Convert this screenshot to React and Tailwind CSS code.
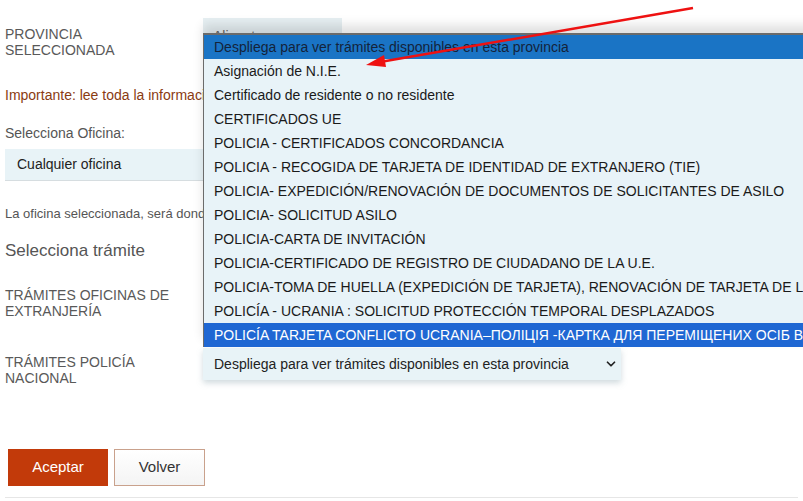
import { ChevronDown } from 'lucide-react'

const options = [
  'Despliega para ver trámites disponibles en esta provincia',
  'Asignación de N.I.E.',
  'Certificado de residente o no residente',
  'CERTIFICADOS UE',
  'POLICIA - CERTIFICADOS CONCORDANCIA',
  'POLICIA - RECOGIDA DE TARJETA DE IDENTIDAD DE EXTRANJERO (TIE)',
  'POLICIA- EXPEDICIÓN/RENOVACIÓN DE DOCUMENTOS DE SOLICITANTES DE ASILO',
  'POLICIA- SOLICITUD ASILO',
  'POLICIA-CARTA DE INVITACIÓN',
  'POLICIA-CERTIFICADO DE REGISTRO DE CIUDADANO DE LA U.E.',
  'POLICIA-TOMA DE HUELLA (EXPEDICIÓN DE TARJETA), RENOVACIÓN DE TARJETA DE LARGA DURACIÓN',
  'POLICÍA - UCRANIA : SOLICITUD PROTECCIÓN TEMPORAL DESPLAZADOS',
  'POLICÍA TARJETA CONFLICTO UCRANIA–ПОЛІЦІЯ -КАРТКА ДЛЯ ПЕРЕМІЩЕНИХ ОСІБ В УКРАЇНІ',
]

function Label({ children }) {
  return <div className="w-[198px] shrink-0 text-[14px] leading-[16px] text-[#595959]">{children}</div>
}

export default function App() {
  return (
    <div className="relative h-[501px] w-[803px] overflow-hidden bg-white font-['Liberation_Sans',Arial,sans-serif]">
      <div className="flex flex-col px-[5px] pt-[18px]">
        <div className="flex">
          <div className="pt-[8px]">
            <Label>
              PROVINCIA
              <br />
              SELECCIONADA
            </Label>
          </div>
          <div className="h-[32px] w-[139px] bg-[#e6eff2] px-[10px] pt-[8px] text-[14px] text-[#666]">Alicante</div>
        </div>

        <p className="mt-[29px] text-[14px] leading-[16px] text-[#8a3b12]">
          Importante: lee toda la información antes de continuar con el proceso
        </p>

        <p className="mt-[22px] text-[14px] leading-[16px] text-[#555]">Selecciona Oficina:</p>

        <div className="mt-[8px] flex h-[32px] w-[616px] items-center border-b border-[#d6dde0] bg-[#e8f3f7] px-[12px] text-[14px] text-[#222]">
          Cualquier oficina
        </div>

        <p className="mt-[25px] text-[13px] leading-[16px] text-[#555]">
          La oficina seleccionada, será donde deberá presentarse para realizar el trámite
        </p>

        <p className="mt-[19px] text-[17px] leading-[20px] text-[#555]">Selecciona trámite</p>

        <div className="mt-[26px] flex">
          <Label>
            TRÁMITES OFICINAS DE
            <br />
            EXTRANJERÍA
          </Label>
        </div>

        <div className="mt-[29px] flex">
          <div className="pt-[6px]">
            <Label>
              TRÁMITES POLICÍA
              <br />
              NACIONAL
            </Label>
          </div>
          <div className="flex h-[32px] w-[418px] items-center justify-between bg-[#e8f3f7] pl-[11px] pr-[3px] text-[14px] text-[#222] shadow-[0_3px_6px_rgba(120,150,160,0.35)]">
            <span>Despliega para ver trámites disponibles en esta provincia</span>
            <ChevronDown className="size-[14px] text-[#222]" strokeWidth={3} />
          </div>
        </div>

        <div className="mt-[63px] flex gap-[6px] pl-[3px]">
          <button className="h-[37px] w-[100px] bg-[#c23a0a] text-[15px] text-white">Aceptar</button>
          <button className="h-[37px] w-[91px] border border-[#c9a18c] bg-gradient-to-b from-white to-[#f4f4f4] text-[15px] text-[#333]">
            Volver
          </button>
        </div>

        <div className="mt-[11px] h-px w-full bg-[#e6e6e6]" />
      </div>

      {/* Open dropdown list of the trámites select */}
      <div className="absolute left-[203px] top-[33px] w-[700px] border-l border-t-2 border-[#6b6b6b] bg-[#e8f3f8] shadow-[0_-8px_10px_rgba(0,0,0,0.12)]">
        {options.map((o, i) => (
          <div
            key={o}
            className={
              'h-[24px] whitespace-nowrap pl-[10px] text-[14px] leading-[24px] ' +
              (i === 0
                ? 'h-[23px] bg-[#1a74c5] leading-[23px] text-[#14233a]'
                : i === options.length - 1
                  ? 'bg-[#1f67d3] text-white'
                  : 'text-[#1a1a1a]')
            }
          >
            {o}
          </div>
        ))}
      </div>

      {/* Red annotation arrow */}
      <svg className="pointer-events-none absolute left-0 top-0" width="803" height="501">
        <line x1="693" y1="8" x2="380" y2="62" stroke="#ee1111" strokeWidth="2.5" />
        <polygon points="366,65 384,55 386,67" fill="#ee1111" />
      </svg>
    </div>
  )
}
